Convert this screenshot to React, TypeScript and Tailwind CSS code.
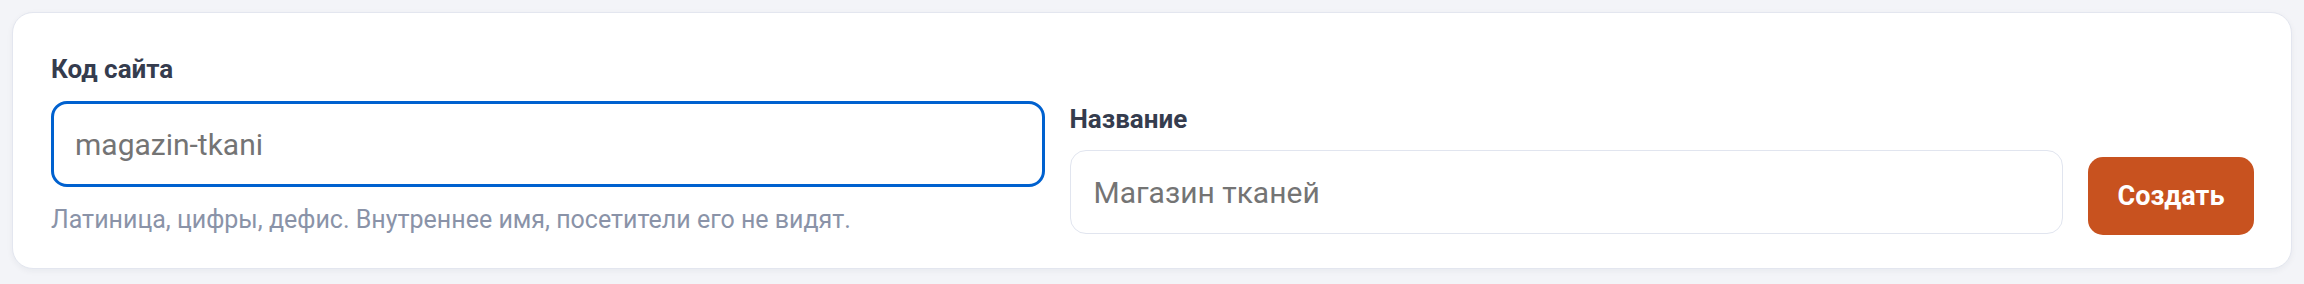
import React from "react";

export default function App() {
  return (
    <div
      className="min-h-[284px] bg-[#f3f4f8] px-3 pt-3 pb-[14px]"
      style={{ fontFamily: "Roboto, 'Noto Sans', sans-serif" }}
    >
      <div className="flex items-end gap-[25px] rounded-[21px] border-[1.5px] border-[#e3e6ef] bg-white pl-[38px] pr-[37px] pt-[38px] pb-[30px] shadow-[0_2px_6px_rgba(20,30,60,0.05)]">
        <div className="flex flex-1 flex-col">
          <label className="text-[26px] font-bold leading-[36px] text-[#353c4e]">
            Код сайта
          </label>
          <input
            readOnly
            defaultValue="magazin-tkani"
            className="mt-[14px] h-[86px] w-full rounded-[16px] border-[3px] border-[#0061cf] bg-white px-[21px] text-[30px] text-[#747474] outline-none"
          />
          <p className="mt-[15px] text-[25px] leading-[36px] text-[#8a93a8]">
            Латиница, цифры, дефис. Внутреннее имя, посетители его не видят.
          </p>
        </div>
        <div className="mb-[4px] flex flex-1 flex-col">
          <label className="text-[26px] font-bold leading-[36px] text-[#353c4e]">
            Название
          </label>
          <input
            readOnly
            defaultValue="Магазин тканей"
            className="mt-[13px] h-[84px] w-full rounded-[16px] border-[1.5px] border-[#e1e5ef] bg-white px-[23px] text-[30px] text-[#747474] outline-none"
          />
        </div>
        <button className="mb-[3px] h-[78px] w-[166px] shrink-0 rounded-[15px] bg-[#c8521f] text-[27px] font-bold text-white">
          Создать
        </button>
      </div>
    </div>
  );
}
